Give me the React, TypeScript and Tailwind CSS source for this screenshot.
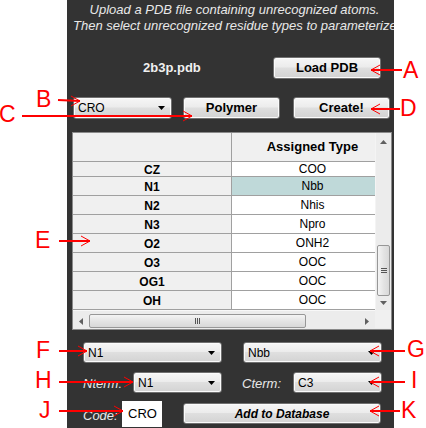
import React from "react";

const BTN =
  "flex items-center justify-center rounded-[3px] border border-[#707070] bg-[linear-gradient(#f6f6f6,#ececec_45%,#dfdfdf_50%,#d3d3d3)] shadow-[inset_0_0_0_1px_#fbfbfb] text-black";

function Caret() {
  return (
    <svg width="7" height="4" viewBox="0 0 7 4">
      <path d="M0 0h7L3.5 4z" fill="#000" />
    </svg>
  );
}

function Select({ label, className }: { label: string; className: string }) {
  return (
    <div
      className={`flex items-center justify-between pl-[4px] pr-[6px] rounded-[3px] border border-[#707070] bg-[linear-gradient(#f6f6f6,#ececec_45%,#dfdfdf_50%,#d3d3d3)] shadow-[inset_0_0_0_1px_#fbfbfb] text-[12px] text-black ${className}`}
    >
      <span>{label}</span>
      <Caret />
    </div>
  );
}

const rows: { a: string; t: string; h: string; sel?: boolean }[] = [
  { a: "CZ", t: "COO", h: "h-[15px]" },
  { a: "N1", t: "Nbb", h: "h-[19px]", sel: true },
  { a: "N2", t: "Nhis", h: "h-[19px]" },
  { a: "N3", t: "Npro", h: "h-[19px]" },
  { a: "O2", t: "ONH2", h: "h-[19px]" },
  { a: "O3", t: "OOC", h: "h-[19px]" },
  { a: "OG1", t: "OOC", h: "h-[19px]" },
  { a: "OH", t: "OOC", h: "h-[19px]" },
];

function Table() {
  return (
    <div className="ml-[5px] w-[320px] h-[198px] border border-[#8a8a8a] bg-[#f0f0f0] flex flex-col">
      <div className="flex h-[177px]">
        <div className="w-[302px] overflow-hidden">
          <div className="w-[320px]">
            <div className="flex h-[29px] border-b border-[#a0a0a0]">
              <div className="w-[159px] border-r border-[#a0a0a0] bg-[#f0f0f0]" />
              <div className="w-[161px] flex items-center justify-center font-bold text-[13px] text-black bg-[#f0f0f0]">
                Assigned Type
              </div>
            </div>
            {rows.map((r) => (
              <div key={r.a} className={`flex ${r.h} border-b border-[#a0a0a0] overflow-hidden`}>
                <div className="w-[159px] border-r border-[#a0a0a0] bg-[#f0f0f0] flex items-center justify-center font-bold text-[12px] text-black pt-[2px]">
                  {r.a}
                </div>
                <div
                  className={`w-[161px] flex items-center justify-center text-[12px] text-black ${
                    r.sel ? "bg-[#bfd9d9]" : "bg-white"
                  }`}
                >
                  {r.t}
                </div>
              </div>
            ))}
          </div>
        </div>
        {/* vertical scrollbar */}
        <div className="w-[16px] flex flex-col bg-[#ececec] border-l border-[#f4f4f4]">
          <div className="h-[17px] flex items-center justify-center">
            <svg width="7" height="4" viewBox="0 0 7 4">
              <path d="M0 4h7L3.5 0z" fill="#606060" />
            </svg>
          </div>
          <div className="h-[95px]" />
          <div className="h-[51px] mx-[1px] rounded-[2px] border border-[#979797] bg-[linear-gradient(90deg,#f4f4f4,#e4e4e4_50%,#d8d8d8)] flex flex-col items-center justify-center gap-[1px]">
            <div className="w-[6px] h-[1px] bg-[#555]" />
            <div className="w-[6px] h-[1px] bg-[#555]" />
            <div className="w-[6px] h-[1px] bg-[#555]" />
          </div>
          <div className="flex-1 flex items-center justify-center">
            <svg width="7" height="4" viewBox="0 0 7 4">
              <path d="M0 0h7L3.5 4z" fill="#606060" />
            </svg>
          </div>
        </div>
      </div>
      {/* horizontal scrollbar */}
      <div className="h-[19px] flex items-end pb-[1px] bg-[#ececec] border-t border-[#f8f8f8]">
        <div className="w-[16px] h-[14px] flex items-center justify-center">
          <svg width="4" height="7" viewBox="0 0 4 7">
            <path d="M4 0v7L0 3.5z" fill="#606060" />
          </svg>
        </div>
        <div className="w-[217px] h-[14px] rounded-[2px] border border-[#979797] bg-[linear-gradient(#f4f4f4,#e4e4e4_50%,#d8d8d8)] flex items-center justify-center gap-[1px]">
          <div className="w-[1px] h-[6px] bg-[#555]" />
          <div className="w-[1px] h-[6px] bg-[#555]" />
          <div className="w-[1px] h-[6px] bg-[#555]" />
        </div>
        <div className="w-[69px] h-[14px] flex items-center justify-end pr-[6px]">
          <svg width="4" height="7" viewBox="0 0 4 7">
            <path d="M0 0v7L4 3.5z" fill="#606060" />
          </svg>
        </div>
        <div className="w-[16px] h-[18px] bg-[#f0f0f0]" />
      </div>
    </div>
  );
}

type Arrow = { x1: number; x2: number; y1: number; y2: number };
const arrows: Arrow[] = [
  { x1: 402, y1: 70, x2: 371, y2: 70 },
  { x1: 58, y1: 100, x2: 80, y2: 101 },
  { x1: 22, y1: 116, x2: 192, y2: 116 },
  { x1: 400, y1: 109, x2: 371, y2: 109 },
  { x1: 59, y1: 241, x2: 90, y2: 241 },
  { x1: 59, y1: 351, x2: 87, y2: 351 },
  { x1: 405, y1: 351, x2: 370, y2: 351 },
  { x1: 59, y1: 382, x2: 133, y2: 382 },
  { x1: 405, y1: 382, x2: 370, y2: 382 },
  { x1: 59, y1: 411, x2: 123, y2: 411 },
  { x1: 400, y1: 411, x2: 370, y2: 411 },
];

const letters: { t: string; cls: string }[] = [
  { t: "A", cls: "left-[403px] top-[59px]" },
  { t: "B", cls: "left-[36px] top-[88px]" },
  { t: "C", cls: "left-[-1px] top-[103px]" },
  { t: "D", cls: "left-[400px] top-[97px]" },
  { t: "E", cls: "left-[35px] top-[229px]" },
  { t: "F", cls: "left-[36px] top-[339px]" },
  { t: "G", cls: "left-[407px] top-[338px]" },
  { t: "H", cls: "left-[35px] top-[369px]" },
  { t: "I", cls: "left-[411px] top-[369px]" },
  { t: "J", cls: "left-[39px] top-[399px]" },
  { t: "K", cls: "left-[401px] top-[399px]" },
];

function Annotations() {
  return (
    <>
      <svg className="absolute left-0 top-0 pointer-events-none" width="426" height="428">
        {arrows.map((a, i) => {
          const dir = a.x2 > a.x1 ? -1 : 1;
          return (
            <g key={i} stroke="#ff0000" fill="none">
              <line x1={a.x1} y1={a.y1} x2={a.x2} y2={a.y2} strokeWidth="2" />
              <polyline
                points={`${a.x2 + dir * 9},${a.y2 - 5} ${a.x2},${a.y2} ${a.x2 + dir * 9},${a.y2 + 5}`}
                strokeWidth="1"
              />
            </g>
          );
        })}
      </svg>
      {letters.map((l) => (
        <span
          key={l.t}
          className={`absolute ${l.cls} text-[23px] leading-none text-[#ff0000] font-['Liberation_Sans',Arial,sans-serif]`}
        >
          {l.t}
        </span>
      ))}
    </>
  );
}

export default function App() {
  return (
    <div className="relative w-[426px] h-[428px] bg-white font-['Liberation_Sans',Arial,sans-serif] overflow-hidden">
      <div className="ml-[67px] w-[327px] h-[428px] bg-[#333333] overflow-hidden flex flex-col">
        <div className="ml-[6px] w-[323px] pt-[2px] text-center whitespace-nowrap italic text-[13px] leading-[16px] text-[#e8e8e8]">
          <div>Upload a PDB file containing unrecognized atoms.</div>
          <div>Then select unrecognized residue types to parameterize</div>
        </div>
        <div className="mt-[23px] h-[22px] flex items-center">
          <div className="pl-[76px] w-[206px] text-[13px] font-bold text-[#f0f0f0]">2b3p.pdb</div>
          <div className={`${BTN} w-[108px] h-[22px] text-[13px] font-bold`}>Load PDB</div>
        </div>
        <div className="mt-[18px] h-[22px] flex items-center">
          <Select label="CRO" className="ml-[6px] w-[99px] h-[22px]" />
          <div className={`${BTN} ml-[11px] w-[97px] h-[22px] text-[13px] font-bold`}>Polymer</div>
          <div className={`${BTN} ml-[13px] w-[97px] h-[22px] text-[13px] font-bold`}>Create!</div>
        </div>
        <div className="mt-[13px]">
          <Table />
        </div>
        <div className="mt-[12px] h-[21px] flex items-center">
          <Select label="N1" className="ml-[16px] w-[139px] h-[21px]" />
          <Select label="Nbb" className="ml-[21px] w-[139px] h-[21px]" />
        </div>
        <div className="mt-[9px] h-[21px] flex items-center">
          <div className="ml-[16px] w-[50px] pt-[3px] italic text-[13px] text-[#e8e8e8]">Nterm:</div>
          <Select label="N1" className="w-[89px] h-[21px]" />
          <div className="ml-[20px] w-[51px] pt-[3px] italic text-[13px] text-[#e8e8e8]">Cterm:</div>
          <Select label="C3" className="w-[89px] h-[21px]" />
        </div>
        <div className="mt-[8px] h-[26px] flex items-start">
          <div className="ml-[16px] w-[39px] pt-[5px] italic text-[13px] text-[#e8e8e8]">Code:</div>
          <div className="w-[40px] h-[26px] bg-white pl-[6px] pt-[3px] text-[13px] text-black">CRO</div>
          <div className={`${BTN} ml-[21px] mt-[2px] w-[198px] h-[21px] text-[12px] font-bold italic`}>
            Add to Database
          </div>
        </div>
      </div>
      <Annotations />
    </div>
  );
}
